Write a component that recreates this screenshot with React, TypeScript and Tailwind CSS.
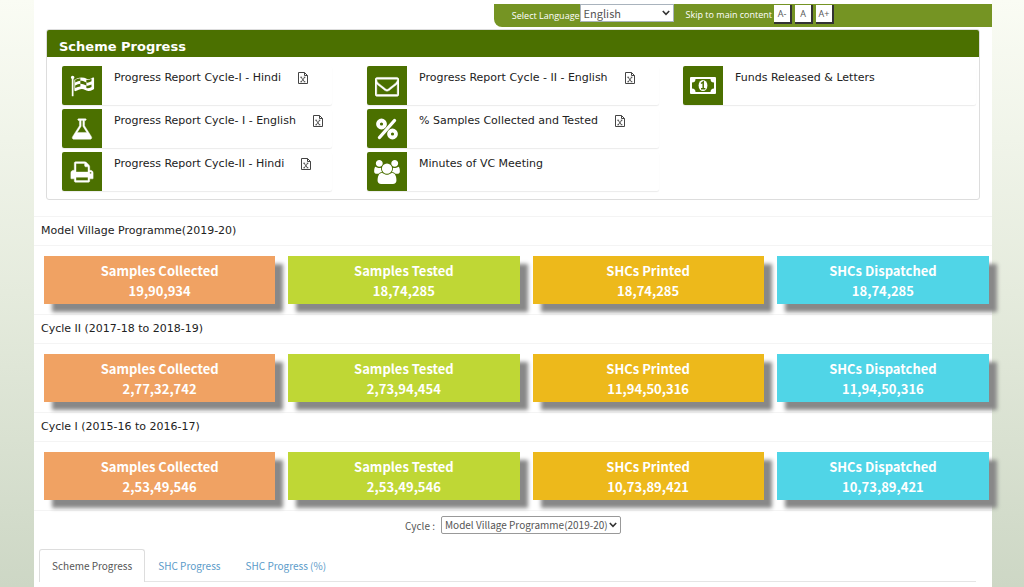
import { ComponentProps, ReactNode } from "react";

const FlagIcon = () => (
  <svg className="w-[25px] h-6" viewBox="64 0 1856 1792" fill="currentColor">
    <path d="M832 926v-192q-181 16-384 117v185q205-96 384-110zm0-418v-197q-172 8-384 126v189q215-111 384-118zm832 463v-184q-235 116-384 71v-224q-20-6-39-15-5-3-33-17t-34.500-17-31.500-15-34.500-15.500-32.500-13-36-12.500-35-8.500-39.500-7.500-39.500-4-44-2q-23 0-49 3v222h19q102 0 192.500 29t197.500 82q19 9 39 15v188q42 17 91 17 120 0 293-92zm0-427v-189q-169 91-306 91-45 0-78-8v196q148 42 384-90zm-1280-288q0 35-17.500 64t-46.500 46v1266q0 14-9 23t-23 9h-64q-14 0-23-9t-9-23v-1266q-29-17-46.500-46t-17.500-64q0-53 37.500-90.500t90.500-37.500 90.500 37.500 37.500 90.500zm1472 64v763q0 39-35 57-10 5-17 9-218 116-369 116-88 0-158-35l-28-14q-64-33-99-48t-91-29-114-14q-102 0-235.500 44t-228.500 102q-15 9-33 9-16 0-32-8-32-19-32-56v-742q0-35 31-55 35-21 78.500-42.500t114-52 152.500-49.500 155-19q112 0 209 31t209 86q38 19 89 19 122 0 310-112 22-12 31-17 31-16 62 2 31 20 31 55z" />
  </svg>
);

const FlaskIcon = () => (
  <svg className="w-6 h-6" viewBox="0 0 1792 1792" fill="currentColor" stroke="currentColor" strokeWidth="30">
    <path d="M1591 1448q56 89 21.500 152.500t-140.500 63.500h-1152q-106 0-140.500-63.500t21.500-152.500l503-793v-399h-64q-26 0-45-19t-19-45 19-45 45-19h512q26 0 45 19t19 45-19 45-45 19h-64v399zm-779-725l-272 429h712l-272-429-20-31v-436h-128v436z" />
  </svg>
);

const PrintIcon = () => (
  <svg className="w-6 h-6" viewBox="0 0 1792 1792" fill="currentColor" stroke="currentColor" strokeWidth="30">
    <path d="M448 1536h896v-256h-896v256zm0-640h896v-384h-160q-40 0-68-28t-28-68v-160h-640v640zm1152 64q0-26-19-45t-45-19-45 19-19 45 19 45 45 19 45-19 19-45zm128 0v416q0 13-9.500 22.500t-22.500 9.500h-224v160q0 40-28 68t-68 28h-960q-40 0-68-28t-28-68v-160h-224q-13 0-22.500-9.500t-9.500-22.500v-416q0-79 56.500-135.500t135.500-56.500h64v-544q0-40 28-68t68-28h672q40 0 88 20t76 48l152 152q28 28 48 76t20 88v256h64q79 0 135.500 56.500t56.500 135.500z" />
  </svg>
);

const EnvelopeIcon = () => (
  <svg className="w-6 h-6" viewBox="0 0 1792 1792" fill="currentColor" stroke="currentColor" strokeWidth="40">
    <path d="M1664 1504v-768q-32 36-69 66-268 206-426 338-51 43-83 67t-86.500 48.500-102.500 24.500h-2q-48 0-102.500-24.500t-86.500-48.500-83-67q-158-132-426-338-37-30-69-66v768q0 13 9.500 22.500t22.500 9.500h1472q13 0 22.500-9.500t9.500-22.500zm0-1051v-24.500l-.5-13-3-12.500-5.500-9-9-7.500-14-2.500h-1472q-13 0-22.500 9.500t-9.500 22.500q0 168 147 284 193 152 401 317 6 5 35 29.500t46 37.500 44.500 31.500 50.500 27.500 43 9h2q20 0 43-9t50.500-27.500 44.500-31.500 46-37.500 35-29.500q208-165 401-317 54-43 100.500-115.500t46.500-131.500zm128-37v1088q0 66-47 113t-113 47h-1472q-66 0-113-47t-47-113v-1088q0-66 47-113t113-47h1472q66 0 113 47t47 113z" />
  </svg>
);

const PercentIcon = () => (
  <svg className="w-6 h-6" viewBox="0 0 24 24" fill="none" stroke="currentColor">
    <circle cx="6.500" cy="7" r="3.500" strokeWidth="3.800" />
    <circle cx="17.500" cy="17" r="3.500" strokeWidth="3.800" />
    <path d="M19.500 3.500L4.500 20.500" strokeWidth="3.400" strokeLinecap="round" />
  </svg>
);

const GroupIcon = () => (
  <svg className="w-[26px] h-6" viewBox="-64 0 1920 1792" fill="currentColor">
    <path d="M529 896q-162 5-265 128h-134q-82 0-138-40.500t-56-118.500q0-353 124-353 6 0 43.500 21t97.500 42.500 119 21.500q67 0 133-23-5 37-5 66 0 139 81 256zm1071 637q0 120-73 189.500t-194 69.500h-874q-121 0-194-69.500t-73-189.500q0-53 3.500-103.500t14-109 26.500-108.500 43-97.500 62-81 85.500-53.500 111.500-20q10 0 43 21.500t73 48 107 48 135 21.500 135-21.500 107-48 73-48 43-21.500q61 0 111.500 20t85.500 53.500 62 81 43 97.500 26.500 108.500 14 109 3.500 103.500zm-1024-1277q0 106-75 181t-181 75-181-75-75-181 75-181 181-75 181 75 75 181zm704 384q0 159-112.500 271.500t-271.500 112.500-271.500-112.500-112.500-271.500 112.500-271.500 271.500-112.500 271.500 112.500 112.500 271.500zm576 225q0 78-56 118.500t-138 40.500h-134q-103-123-265-128 81-117 81-256 0-29-5-66 66 23 133 23 59 0 119-21.500t97.500-42.500 43.500-21q124 0 124 353zm-128-609q0 106-75 181t-181 75-181-75-75-181 75-181 181-75 181 75 75 181z" />
  </svg>
);

const MoneyIcon = () => (
  <svg className="w-[26px] h-6" viewBox="0 0 26 24" fill="currentColor">
    <path
      fillRule="evenodd"
      d="M1 3h24a1 1 0 011 1v15a1 1 0 01-1 1H1a1 1 0 01-1-1V4a1 1 0 011-1zm4.500 2A3.500 3.500 0 012 8.500v6A3.500 3.500 0 015.500 18h15a3.500 3.500 0 013.500-3.500v-6A3.500 3.500 0 0120.500 5z"
    />
    <ellipse cx="13" cy="11.500" rx="4.400" ry="5.600" />
    <path d="M11 9.500l2.200-1.500v6.500M11 14.700h4.400" fill="none" stroke="#4b7000" strokeWidth="1.500" />
  </svg>
);

const ExcelIcon = () => (
  <svg className="w-3 h-3" viewBox="0 0 12 12" fill="none" stroke="#444">
    <path d="M1.500.5h6l3 3v8h-9zM7.500.5v3h3" />
    <path d="M4 5.200l3.600 4.600M7.800 5.200L4.200 9.800M3.300 5.200h1.800M6.700 5.200h1.700M3.300 9.800h1.800M6.700 9.800h1.700" strokeWidth=".9" />
  </svg>
);

// select with its own arrow laid over the right edge
const Select = ({ className, ...props }: ComponentProps<"select">) => (
  <div className="relative">
    <select
      className={`appearance-none block h-[18px] pl-[3px] bg-white border text-[#555] leading-4 ${className}`}
      {...props}
    />
    <svg
      className="absolute right-1 top-[6px] w-2 h-[6px] pointer-events-none"
      viewBox="0 0 8 6"
      fill="none"
      stroke="#333"
      strokeWidth="1.600"
    >
      <path d="M.8 1L4 4.300 7.200 1" />
    </svg>
  </div>
);

type Report = { label: string; icon: ReactNode; excel?: boolean };

const reportColumns: { className: string; items: Report[] }[] = [
  {
    className: "mr-[35px]",
    items: [
      { label: "Progress Report Cycle-I - Hindi", icon: <FlagIcon />, excel: true },
      { label: "Progress Report Cycle- I - English", icon: <FlaskIcon />, excel: true },
      { label: "Progress Report Cycle-II - Hindi", icon: <PrintIcon />, excel: true },
    ],
  },
  {
    className: "mr-6",
    items: [
      { label: "Progress Report Cycle - II - English", icon: <EnvelopeIcon />, excel: true },
      { label: "% Samples Collected and Tested", icon: <PercentIcon />, excel: true },
      { label: "Minutes of VC Meeting", icon: <GroupIcon /> },
    ],
  },
  {
    className: "",
    items: [{ label: "Funds Released & Letters", icon: <MoneyIcon /> }],
  },
];

const cardTypes = [
  { title: "Samples Collected", color: "bg-[#f0a263]" },
  { title: "Samples Tested", color: "bg-[#bfd735]" },
  { title: "SHCs Printed", color: "bg-[#edb91b]" },
  { title: "SHCs Dispatched", color: "bg-[#50d5e7]" },
];

const cycles = [
  {
    name: "Model Village Programme(2019-20)",
    values: ["19,90,934", "18,74,285", "18,74,285", "18,74,285"],
  },
  {
    name: "Cycle II (2017-18 to 2018-19)",
    values: ["2,77,32,742", "2,73,94,454", "11,94,50,316", "11,94,50,316"],
  },
  {
    name: "Cycle I (2015-16 to 2016-17)",
    values: ["2,53,49,546", "2,53,49,546", "10,73,89,421", "10,73,89,421"],
  },
];

const tabs = ["Scheme Progress", "SHC Progress", "SHC Progress (%)"];

const TopBar = () => (
  <div className="flex justify-end pt-1">
    <div className="flex items-start w-[52%] h-[23px] pl-[18px] rounded-bl-lg bg-[#759423] text-white text-[9px] font-['Open_Sans',sans-serif]">
      <label htmlFor="language" className="pt-[5px] whitespace-nowrap">
        Select Language
      </label>
      <Select
        id="language"
        className="w-[94px] border-[#a9b3bd] text-[11px] font-['Noto_Sans_CJK_SC',sans-serif]"
      >
        <option>English</option>
        <option>Hindi</option>
      </Select>
      <a href="#main" className="ml-3 pt-1 whitespace-nowrap">
        Skip to main content
      </a>
      <div className="flex gap-[3px] ml-[2px] pt-px">
        {["A-", "A", "A+"].map((size) => (
          <button
            key={size}
            className="w-[18px] h-[19px] bg-white border-r-2 border-b-2 border-[#333] text-[#555] text-[9px] leading-4"
          >
            {size}
          </button>
        ))}
      </div>
    </div>
  </div>
);

const SchemePanel = () => (
  <section className="ml-3 mr-3 mt-[2px] h-[171px] bg-white border border-[#ddd] rounded-[3px] overflow-hidden">
    <h1 className="h-[27px] pl-3 pt-[7px] bg-[#4b7000] text-white text-[13px] leading-5 font-bold">
      Scheme Progress
    </h1>
    <div className="grid grid-cols-[305fr_316fr_293fr] pl-[15px] pr-[3px] pt-[9px]">
      {reportColumns.map((column, i) => (
        <ul key={i} className={column.className}>
          {column.items.map((item) => (
            <li
              key={item.label}
              className="flex h-[39px] mb-1 rounded-xs shadow-[0_1px_1px_rgba(0,0,0,0.08)] overflow-hidden"
            >
              <span className="flex items-center justify-center w-10 shrink-0 bg-[#4b7000] text-white">
                {item.icon}
              </span>
              <a
                href="#report"
                className="flex items-center gap-4 h-6 pl-3 text-[11px] text-[#222] whitespace-nowrap"
              >
                {item.label}
                {item.excel && <ExcelIcon />}
              </a>
            </li>
          ))}
        </ul>
      ))}
    </div>
  </section>
);

const CycleRow = ({ name, values }: { name: string; values: string[] }) => (
  <section>
    <h2 className="h-[30px] pl-[7px] border-y border-[#f4f4f4] text-[11px] leading-7 text-[#222]">
      {name}
    </h2>
    <div className="grid grid-cols-[231fr_231fr_231fr_212fr] gap-[13px] pl-[10px] pr-[3px] pt-[10px] pb-[10px]">
      {cardTypes.map((card, i) => (
        <div
          key={card.title}
          className={`h-12 pt-[5px] text-center text-white text-[13px] leading-5 font-bold font-['Noto_Sans_CJK_SC',sans-serif] shadow-[8px_8px_4px_#888] ${card.color}`}
        >
          <div>{card.title}</div>
          <div>{values[i]}</div>
        </div>
      ))}
    </div>
  </section>
);

export default function App() {
  return (
    <div className="min-h-screen pl-[34px] pr-8 bg-linear-to-b from-[#fafcf4] via-[#e5ebdd] to-[#cdd7c5] font-['DejaVu_Sans',sans-serif]">
      <main id="main" className="min-h-screen bg-white">
        <TopBar />
        <SchemePanel />
        <div className="pt-4">
          {cycles.map((cycle) => (
            <CycleRow key={cycle.name} {...cycle} />
          ))}
        </div>
        <div className="font-['Noto_Sans_CJK_SC',sans-serif] text-[#555] text-[10px]">
          <div className="flex items-center justify-center gap-[6px] pt-[5px] border-t border-[#f4f4f4]">
            <label htmlFor="cycle">Cycle :</label>
            <Select id="cycle" className="w-[180px] border-[#999] rounded-xs">
              {cycles.map((cycle) => (
                <option key={cycle.name}>{cycle.name}</option>
              ))}
            </Select>
          </div>
          <nav className="flex ml-[5px] mr-4 mt-[15px] h-[33px] border-b border-[#e5e5e5]">
            {tabs.map((tab, i) => (
              <a
                key={tab}
                href="#tab"
                className={
                  i === 0
                    ? "h-[33px] px-3 bg-white border border-b-0 border-[#ddd] rounded-t-[3px] leading-8"
                    : "ml-px px-3 leading-[34px] text-[#5b9bc9]"
                }
              >
                {tab}
              </a>
            ))}
          </nav>
        </div>
      </main>
    </div>
  );
}
